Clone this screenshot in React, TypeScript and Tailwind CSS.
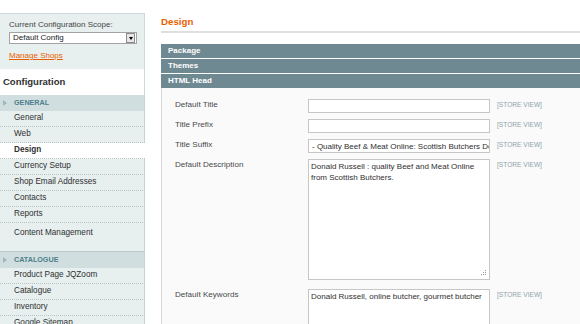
import React from 'react'

type NavItem = { label: string; active?: boolean; last?: boolean }

const generalItems: NavItem[] = [
  { label: 'General' },
  { label: 'Web' },
  { label: 'Design', active: true },
  { label: 'Currency Setup' },
  { label: 'Shop Email Addresses' },
  { label: 'Contacts' },
  { label: 'Reports' },
  { label: 'Content Management', last: true },
]

const catalogueItems: NavItem[] = [
  { label: 'Product Page JQZoom' },
  { label: 'Catalogue' },
  { label: 'Inventory' },
  { label: 'Google Sitemap' },
]

const GroupHeader = ({ title }: { title: string }) => (
  <div className="h-[16px] bg-[#d1dedf] border-r border-[#c3d3d7] flex items-center">
    <span className="ml-[3px] w-0 h-0 border-y-[3px] border-y-transparent border-l-[4px] border-l-[#a3b6bb]" />
    <span className="ml-[7px] text-[7.2px] font-bold uppercase text-[#4d7f8c] leading-[16px]">
      {title}
    </span>
  </div>
)

const NavRow = ({ item }: { item: NavItem }) => (
  <div
    className={
      item.active
        ? 'h-[16px] bg-white border-b border-b-[#b7c5c9] [border-bottom-style:dotted] pl-[14px] flex items-center text-[8.2px] font-bold text-[#2f2f2f]'
        : item.last
          ? 'h-[28px] bg-[#e7efef] border-r border-r-[#c3d3d7] pl-[14px] pt-[5px] text-[8.2px] text-[#2f2f2f] leading-[10px]'
          : 'h-[16px] bg-[#e7efef] border-r border-r-[#c3d3d7] border-b border-b-[#b7c5c9] [border-bottom-style:dotted] pl-[14px] flex items-center text-[8.2px] text-[#2f2f2f]'
    }
  >
    {item.label}
  </div>
)

const StoreView = () => (
  <span className="ml-[7px] text-[6.6px] leading-[12px] text-[#8fa3ab]">[STORE VIEW]</span>
)

const Label = ({ children }: { children: React.ReactNode }) => (
  <div className="w-[133px] shrink-0 text-[8.1px] leading-[12px] text-[#494949]">{children}</div>
)

const Grip = () => (
  <svg className="absolute right-[3px] bottom-[4px]" width="7" height="7" viewBox="0 0 7 7">
    <rect x="5" y="1" width="1" height="1" fill="#9a9a9a" />
    <rect x="3" y="3" width="1" height="1" fill="#9a9a9a" />
    <rect x="5" y="3" width="1" height="1" fill="#9a9a9a" />
    <rect x="1" y="5" width="1" height="1" fill="#9a9a9a" />
    <rect x="3" y="5" width="1" height="1" fill="#9a9a9a" />
    <rect x="5" y="5" width="1" height="1" fill="#9a9a9a" />
  </svg>
)

export default function App() {
  return (
    <div className="w-[580px] h-[324px] overflow-hidden bg-white flex items-start pt-[13px] font-['Liberation_Sans',Arial,sans-serif]">
      {/* sidebar */}
      <aside className="w-[145px] shrink-0">
        <div className="h-[56px] bg-[#e7efef] border-t border-r border-[#cddadd] px-[9px] pt-[6px]">
          <div className="text-[8px] leading-[10px] text-[#444]">Current Configuration Scope:</div>
          <div className="mt-[2px] w-[128px] h-[12px] bg-white border border-[#a3a3a3] flex items-center">
            <span className="pl-[3px] text-[8px] text-[#222] leading-[10px]">Default Config</span>
            <span className="ml-auto mr-px w-[9px] h-[10px] border border-[#8c8c8c] bg-[#e6e6e6] flex items-center justify-center">
              <span className="w-0 h-0 border-x-[2.5px] border-x-transparent border-t-[3px] border-t-black" />
            </span>
          </div>
          <div className="mt-[7px] text-[8px] leading-[10px] text-[#eb5e00] underline">Manage Shops</div>
        </div>
        <div className="h-[26px] bg-white border-r border-[#cddadd] flex items-center pl-[3px]">
          <span className="text-[9.5px] font-bold text-[#2f2f2f]">Configuration</span>
        </div>
        <GroupHeader title="General" />
        {generalItems.map((item) => (
          <NavRow key={item.label} item={item} />
        ))}
        <div className="border-t border-[#b9c9cd]">
          <GroupHeader title="Catalogue" />
        </div>
        {catalogueItems.map((item) => (
          <NavRow key={item.label} item={item} />
        ))}
      </aside>

      {/* main */}
      <main className="ml-[16px] flex-1 min-w-0">
        <div className="h-[20px] border-b-2 border-[#dfdfdf] pt-[3px]">
          <h1 className="text-[9.7px] leading-[12px] font-bold text-[#eb5e00]">Design</h1>
        </div>

        <div className="mt-[11px] flex flex-col gap-px">
          {['Package', 'Themes', 'HTML Head'].map((title) => (
            <div key={title} className="h-[14px] bg-[#6f8992] pl-[7px] text-[8px] font-bold leading-[14px] text-white">
              {title}
            </div>
          ))}
        </div>

        <div className="bg-[#fafafa] border-l border-[#d6d6d6] pl-[13px] pt-[11px] pb-[20px] flex flex-col gap-[6px]">
          <div className="flex items-start">
            <Label>Default Title</Label>
            <input readOnly value="" className="w-[182px] h-[14px] bg-white border border-[#c6c6c6] outline-none" />
            <StoreView />
          </div>
          <div className="flex items-start">
            <Label>Title Prefix</Label>
            <input readOnly value="" className="w-[182px] h-[14px] bg-white border border-[#c6c6c6] outline-none" />
            <StoreView />
          </div>
          <div className="flex items-start">
            <Label>Title Suffix</Label>
            <input
              readOnly
              value="- Quality Beef & Meat Online: Scottish Butchers Donald Russell"
              className="w-[182px] h-[14px] bg-white border border-[#c6c6c6] pl-[3px] text-[8px] text-[#2f2f2f] outline-none"
            />
            <StoreView />
          </div>
          <div className="flex items-start mb-[3px]">
            <Label>Default Description</Label>
            <div className="relative">
              <textarea
                readOnly
                value={'Donald Russell : quality Beef and Meat Online from Scottish Butchers.'}
                className="block w-[182px] h-[121px] resize-none bg-white border border-[#c6c6c6] px-[2px] pt-px text-[8px] leading-[11px] text-[#2f2f2f] outline-none overflow-hidden"
              />
              <Grip />
            </div>
            <StoreView />
          </div>
          <div className="flex items-start">
            <Label>Default Keywords</Label>
            <textarea
              readOnly
              value={'Donald Russell, online butcher, gourmet butcher'}
              className="block w-[182px] h-[60px] resize-none bg-white border border-[#c6c6c6] px-[2px] pt-px text-[8px] leading-[11px] text-[#2f2f2f] outline-none overflow-hidden"
            />
            <StoreView />
          </div>
        </div>
      </main>
    </div>
  )
}
